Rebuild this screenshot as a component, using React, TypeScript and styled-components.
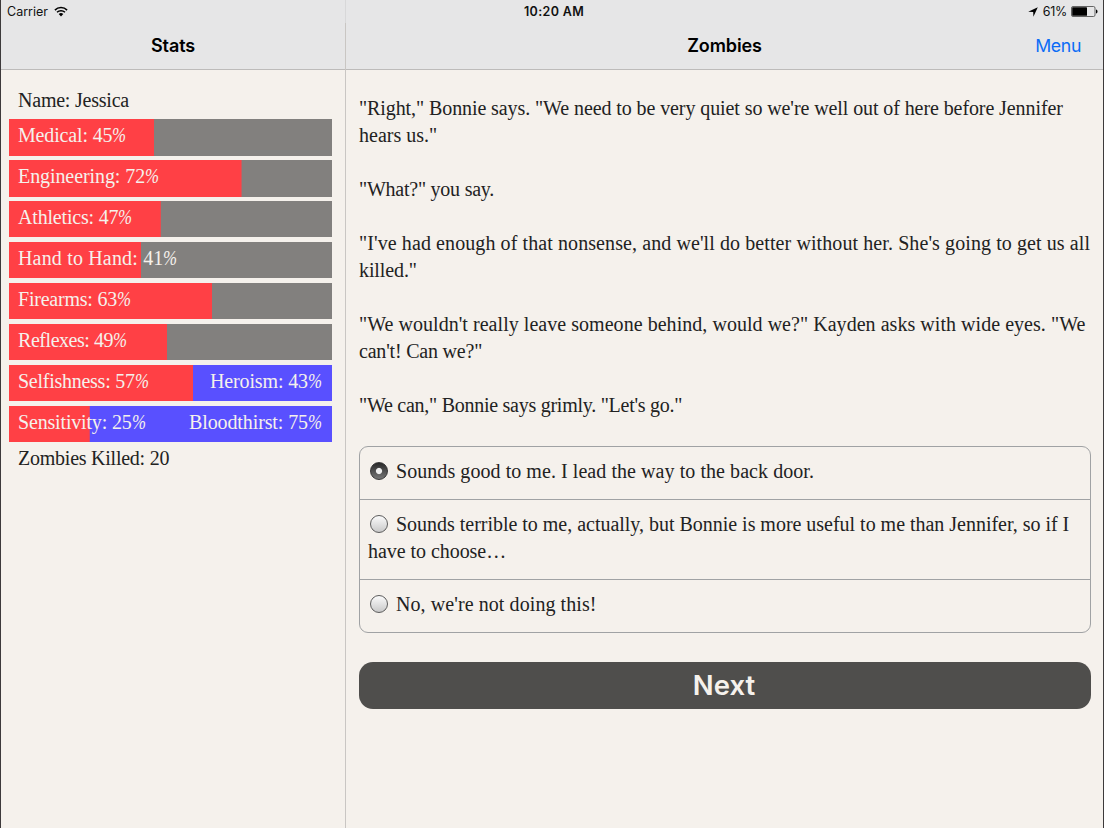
import styled, { createGlobalStyle } from 'styled-components';

const GlobalStyle = createGlobalStyle`
  * {
    box-sizing: border-box;
  }

  body {
    margin: 0;
    background: #f5f1ec;
  }
`;

const sans = `Inter, 'Liberation Sans', sans-serif`;
const serif = `'Liberation Serif', serif`;

interface TrackingType {
  $tracking?: number;
}

interface StatType {
  name: string;
  value: number;
  tracking: number;
  opposite?: string;
  oppositeTracking?: number;
}

interface LineType {
  text: string;
  tracking: number;
}

const Screen = styled.div`
  display: flex;
  flex-direction: column;
  width: 1104px;
  height: 828px;
  overflow: hidden;
  border-left: 1px solid #3d3a3b;
  border-right: 1px solid #3d3a3b;
  background: #f5f1ec;
  color: #222;
  font-family: ${serif};
  font-size: 20px;
  line-height: 27px;
`;

const StatusBar = styled.div`
  display: grid;
  grid-template-columns: 1fr auto 1fr;
  align-items: center;
  height: 23px;
  padding: 0 5px 0 6px;
  background: linear-gradient(
    to right,
    #e6e6e7 344px,
    #d8d8d9 344px,
    #d8d8d9 345px,
    #e6e6e7 345px
  );
  color: #111;
  font-family: ${sans};
  font-size: 12.5px;
  line-height: 23px;
`;

const StatusGroup = styled.div<{ $end?: boolean }>`
  display: flex;
  align-items: center;
  justify-content: ${(props) => (props.$end ? 'flex-end' : 'flex-start')};
  gap: ${(props) => (props.$end ? '4px' : '6px')};
`;

const Clock = styled.span`
  padding-left: 3px;
  font-weight: 600;
  letter-spacing: 0.35px;
`;

const StatusText = styled.span<TrackingType>`
  letter-spacing: ${(props) => props.$tracking || 0}px;
`;

const Panels = styled.div`
  display: flex;
  flex: 1;
`;

const Sidebar = styled.aside`
  flex: 0 0 345px;
  border-right: 1px solid #c9c6c3;
`;

const Main = styled.main`
  flex: 1;
  min-width: 0;
`;

const NavBar = styled.header`
  display: grid;
  grid-template-columns: 1fr auto 1fr;
  align-items: center;
  height: 47px;
  padding: 0 22px 2px;
  border-bottom: 1px solid #bdbbba;
  background: #e6e6e7;
  font-family: ${sans};
`;

const NavTitle = styled.h1`
  grid-column: 2;
  margin: 0;
  color: #000;
  font-size: 18px;
  font-weight: 600;
  letter-spacing: -0.1px;
`;

const MenuButton = styled.button`
  justify-self: end;
  padding: 0;
  border: 0;
  background: none;
  color: #0b6cf6;
  font-family: ${sans};
  font-size: 17.7px;
  letter-spacing: -0.35px;
`;

const StatList = styled.div`
  display: flex;
  flex-direction: column;
  padding: 17px 13px 0 8px;
`;

const StatText = styled.div<TrackingType>`
  height: 32px;
  padding-left: 9px;
  letter-spacing: ${(props) => props.$tracking || 0}px;
`;

const Bars = styled.div`
  display: flex;
  flex-direction: column;
  gap: 4.35px;
  margin-bottom: 3px;
`;

const Bar = styled.div<{ $opposed: boolean }>`
  display: flex;
  justify-content: space-between;
  height: 36.6px;
  padding: 3px 10px 0 9px;
  background-color: ${(props) => (props.$opposed ? '#5950ff' : '#82807e')};
  background-image: linear-gradient(#ff4045, #ff4045);
  background-repeat: no-repeat;
  color: #f5f1ec;
`;

const BarLabel = styled.span<TrackingType>`
  letter-spacing: ${(props) => props.$tracking || 0}px;
  white-space: nowrap;
`;

// narrower than the font's own percent sign
const Percent = styled.span`
  display: inline-block;
  margin-right: -2.5px;
  font-style: italic;
  transform: scaleX(0.84);
  transform-origin: left;
`;

const Story = styled.div`
  padding: 25px 12px 0 13px;
`;

const Paragraph = styled.p`
  margin: 0 0 27px;
`;

const Line = styled.span<TrackingType>`
  display: block;
  height: 27px;
  letter-spacing: ${(props) => props.$tracking || 0}px;
  white-space: nowrap;
`;

const Choices = styled.div`
  border: 1px solid #a0a2a4;
  border-radius: 9px;
`;

const Choice = styled.label`
  display: block;
  padding: 11px 8px 14px;

  & + & {
    border-top: 1px solid #a0a2a4;
  }
`;

const Radio = styled.input`
  appearance: none;
  width: 18px;
  height: 18px;
  margin: 0 8px 0 2px;
  border: 1px solid #5c5c5c;
  border-radius: 50%;
  background: linear-gradient(#fbfbfb, #c9c9c9);
  vertical-align: -2px;

  &:checked {
    border-color: #353535;
    background:
      radial-gradient(circle, #eee 0 2.6px, transparent 3.6px),
      linear-gradient(#292929, #777);
  }
`;

const NextButton = styled.button`
  display: block;
  width: 100%;
  height: 47px;
  margin-top: 29px;
  padding: 0 2px 0 0;
  border: 0;
  border-radius: 14px;
  background: #4f4e4c;
  color: #f5f1ec;
  font-family: ${sans};
  font-size: 27.5px;
  font-weight: 600;
  line-height: 47px;
`;

const stats: StatType[] = [
  { name: 'Medical', value: 45, tracking: -0.16 },
  { name: 'Engineering', value: 72, tracking: -0.08 },
  { name: 'Athletics', value: 47, tracking: -0.18 },
  { name: 'Hand to Hand', value: 41, tracking: 0.17 },
  { name: 'Firearms', value: 63, tracking: -0.22 },
  { name: 'Reflexes', value: 49, tracking: -0.45 },
  {
    name: 'Selfishness',
    value: 57,
    tracking: -0.26,
    opposite: 'Heroism',
    oppositeTracking: -0.13,
  },
  {
    name: 'Sensitivity',
    value: 25,
    tracking: -0.17,
    opposite: 'Bloodthirst',
    oppositeTracking: -0.11,
  },
];

const story: LineType[][] = [
  [
    {
      text: `"Right," Bonnie says. "We need to be very quiet so we're well out of here before Jennifer`,
      tracking: -0.09,
    },
    { text: `hears us."`, tracking: 0 },
  ],
  [{ text: `"What?" you say.`, tracking: -0.24 }],
  [
    {
      text: `"I've had enough of that nonsense, and we'll do better without her. She's going to get us all`,
      tracking: 0.09,
    },
    { text: `killed."`, tracking: -0.1 },
  ],
  [
    {
      text: `"We wouldn't really leave someone behind, would we?" Kayden asks with wide eyes. "We`,
      tracking: 0.04,
    },
    { text: `can't! Can we?"`, tracking: -0.2 },
  ],
  [{ text: `"We can," Bonnie says grimly. "Let's go."`, tracking: -0.26 }],
];

const choices: LineType[][] = [
  [
    {
      text: 'Sounds good to me. I lead the way to the back door.',
      tracking: 0.06,
    },
  ],
  [
    {
      text: 'Sounds terrible to me, actually, but Bonnie is more useful to me than Jennifer, so if I',
      tracking: -0.02,
    },
    { text: 'have to choose…', tracking: -0.05 },
  ],
  [{ text: `No, we're not doing this!`, tracking: 0.08 }],
];

const WifiIcon = () => (
  <svg width='14' height='11' viewBox='0 0 14 11' fill='none'>
    <path
      d='M.9 4.1a8.7 8.7 0 0 1 12.2 0M3 6.3a5.7 5.7 0 0 1 8 0'
      stroke='#000'
      strokeWidth='1.5'
    />
    <path d='M4.7 8a3.3 3.3 0 0 1 4.6 0L7 10.4Z' fill='#000' />
  </svg>
);

const LocationIcon = () => (
  <svg width='11' height='10' viewBox='0 0 11 10'>
    <path d='M9.8.2 5.4 9.8 5.2 4.9.2 4.8Z' fill='#000' />
  </svg>
);

const BatteryIcon = () => (
  <svg width='27' height='11' viewBox='0 0 27 11'>
    <rect
      x='.5'
      y='.5'
      width='23.5'
      height='10'
      rx='1.5'
      fill='none'
      stroke='#555'
      strokeWidth='.9'
    />
    <rect x='1.2' y='1.2' width='14.8' height='8.6' rx='.6' fill='#000' />
    <path d='M25 3.5c2 .5 2 3.5 0 4Z' fill='#000' />
  </svg>
);

const StatBar = ({ stat }: { stat: StatType }) => (
  <Bar
    $opposed={Boolean(stat.opposite)}
    style={{ backgroundSize: `${stat.value}% 100%` }}
  >
    <BarLabel $tracking={stat.tracking}>
      {`${stat.name}: ${stat.value}`}
      <Percent>%</Percent>
    </BarLabel>
    {stat.opposite && (
      <BarLabel $tracking={stat.oppositeTracking}>
        {`${stat.opposite}: ${100 - stat.value}`}
        <Percent>%</Percent>
      </BarLabel>
    )}
  </Bar>
);

const App = () => {
  return (
    <Screen>
      <GlobalStyle />
      <StatusBar>
        <StatusGroup>
          <StatusText>Carrier</StatusText>
          <WifiIcon />
        </StatusGroup>
        <Clock>10:20 AM</Clock>
        <StatusGroup $end>
          <LocationIcon />
          <StatusText $tracking={-0.3}>61%</StatusText>
          <BatteryIcon />
        </StatusGroup>
      </StatusBar>
      <Panels>
        <Sidebar>
          <NavBar>
            <NavTitle>Stats</NavTitle>
          </NavBar>
          <StatList>
            <StatText $tracking={-0.22}>Name: Jessica</StatText>
            <Bars>
              {stats.map((el) => (
                <StatBar key={el.name} stat={el} />
              ))}
            </Bars>
            <StatText $tracking={-0.24}>Zombies Killed: 20</StatText>
          </StatList>
        </Sidebar>
        <Main>
          <NavBar>
            <NavTitle>Zombies</NavTitle>
            <MenuButton type='button'>Menu</MenuButton>
          </NavBar>
          <Story>
            {story.map((lines) => (
              <Paragraph key={lines[0].text}>
                {lines.map((el) => (
                  <Line key={el.text} $tracking={el.tracking}>
                    {el.text}
                  </Line>
                ))}
              </Paragraph>
            ))}
            <Choices>
              {choices.map((lines, idx) => (
                <Choice key={lines[0].text}>
                  {lines.map((el, lineIdx) => (
                    <Line key={el.text} $tracking={el.tracking}>
                      {lineIdx === 0 && (
                        <Radio
                          type='radio'
                          name='choice'
                          defaultChecked={idx === 0}
                        />
                      )}
                      {el.text}
                    </Line>
                  ))}
                </Choice>
              ))}
            </Choices>
            <NextButton type='button'>Next</NextButton>
          </Story>
        </Main>
      </Panels>
    </Screen>
  );
};

export default App;
